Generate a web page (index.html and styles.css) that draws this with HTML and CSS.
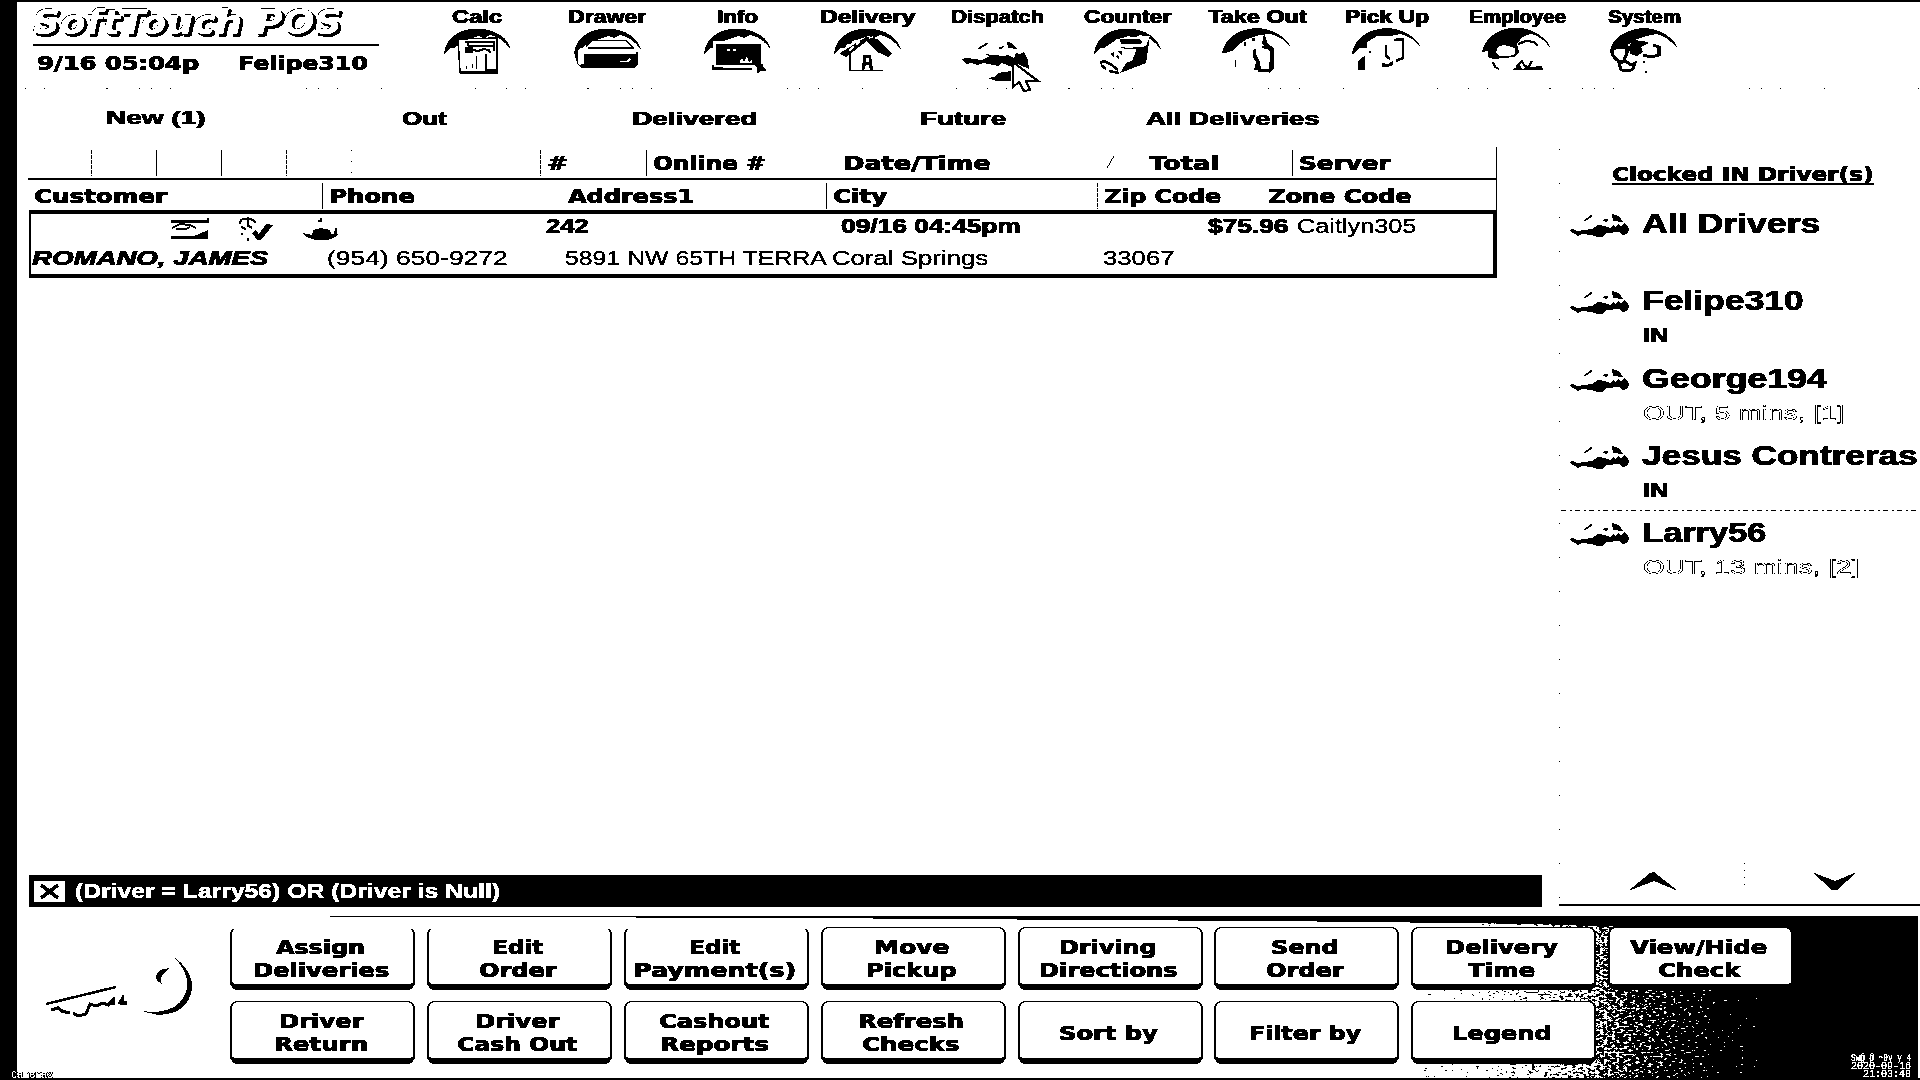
FILE: index.html
```html
<!DOCTYPE html>
<html lang="en">
<head>
<meta charset="utf-8">
<title>SoftTouch POS</title>
<link rel="stylesheet" href="styles.css">
</head>
<body>
<svg class="defs" width="0" height="0" aria-hidden="true">
  <defs>
    <filter id="mono" x="0" y="0" width="1" height="1" color-interpolation-filters="sRGB">
      <feColorMatrix type="saturate" values="0"/>
      <feComponentTransfer>
        <feFuncR type="discrete" tableValues="0 1"/><feFuncG type="discrete" tableValues="0 1"/><feFuncB type="discrete" tableValues="0 1"/>
      </feComponentTransfer>
    </filter>
    <filter id="grain" x="0" y="0" width="1" height="1" color-interpolation-filters="sRGB">
      <feTurbulence type="fractalNoise" baseFrequency="0.25 0.5" numOctaves="2" seed="4" result="n"/>
      <feColorMatrix in="n" type="matrix" values="1 0 0 0 0  1 0 0 0 0  1 0 0 0 0  0 0 0 0 1" result="g"/>
      <feComposite in="SourceGraphic" in2="g" operator="arithmetic" k2="1" k3="2" k4="-1"/>
    </filter>
    <linearGradient id="fade"><stop offset=".08" stop-color="#fff"/><stop offset=".3" stop-color="#d0d0d0"/><stop offset=".5" stop-color="#8c8c8c"/><stop offset=".66" stop-color="#444"/><stop offset=".9" stop-color="#000"/></linearGradient>
    <symbol id="dome" viewBox="0 0 70 48"><path d="M2 26Q4 11 20 4Q35 -1 50 4Q66 10 69 23Q60 10 48 8L42 11L37 9L24 13Q16 18 12 21H8L3 27Z"/></symbol>
    <symbol id="car" viewBox="0 0 60 24"><path d="M0 16L3 15L7 17L22 15L28 11L35 12L40 14L43 11L45 13L49 10L51 13L55 9L58 12L59 16L57 20L53 21L50 18L36 19L32 23H27L22 21L12 20L8 22L3 19ZM42 0L49 2L53 8L43 7ZM32 6L36 5L39 6L36 8Z"/><path d="M14 7L22 1.500" fill="none" stroke="#000" stroke-width="1.600"/></symbol>
  </defs>
</svg>
<div class="screen">
  <header class="top">
    <div class="brand">
      <div class="logo"><span class="fit" data-w="309">SoftTouch POS</span></div>
      <div class="session"><span class="fit" data-w="162">9/16 05:04p</span><span class="fit" data-w="130">Felipe310</span></div>
    </div>
    <nav class="tools">
      <a class="tool"><span class="fit" data-w="50">Calc</span>
        <svg viewBox="0 0 70 48"><use href="#dome"/><path d="M16 12L55 11V45H18Z" fill="#fff" stroke="#000" stroke-width="1.500"/><path d="M18 45.500H55V12" fill="none" stroke="#000" stroke-width="2.500"/><path d="M23 15H53M26 19H52M26 15V19M52 15V24M31 23L36 24L42 22L47 23L48 26" fill="none" stroke="#000" stroke-width="2"/><path d="M23 20H31V26H23Z"/><path d="M34 29V42M24 39V42M30 37V41" fill="none" stroke="#000"/><path d="M44 27V43H54" fill="none" stroke="#000" stroke-width="1.500"/></svg></a>
      <a class="tool"><span class="fit" data-w="78">Drawer</span>
        <svg viewBox="0 0 70 48"><use href="#dome"/><path d="M9 22L20 13L58 13L66 21V24H6Z" fill="#fff"/><path d="M14 20L20 13.500H54L61 21H16" fill="none" stroke="#000" stroke-width="1.500"/><path d="M3 22L6 20V36L9 41H62L66 38V25L12 27V37L6 38L3 30Z"/><path d="M10 27H64V23.500H10Z" fill="#fff"/><path d="M48 34H54L57 31L59 32L57 35H48Z" fill="#fff"/></svg></a>
      <a class="tool"><span class="fit" data-w="41">Info</span>
        <svg viewBox="0 0 70 48"><use href="#dome"/><path d="M11 14H62V41H11Z" fill="#fff"/><path d="M14 17H59V38H14Z"/><path d="M11 40V42H50M11 38V42M54 38H60V40L63 43H59L56 45V41Z" fill="#000" stroke="#000" stroke-width="1.500"/><path d="M25 22H28V24H25ZM31 22H34V24H31ZM38 34L40 31L42 35L45 29L47 35L50 33V36H38Z" fill="#fff"/></svg></a>
      <a class="tool"><span class="fit" data-w="95">Delivery</span>
        <svg viewBox="0 0 70 48"><use href="#dome"/><path d="M18 44V24L34 11L54 27L51 44Z" fill="#fff"/><path d="M8 26L34 10L46 12L60 26L56 30L50 27L45 25L35 14L14 30L10 28Z"/><path d="M14 19L17 17M20 16L24 13M17 24L22 19M24 18L28 14M37 11L41 10" stroke="#fff" stroke-width="1.800"/><path d="M18 26V43.500H51" fill="none" stroke="#000" stroke-width="1.500"/><path d="M31 28H39L41 43H38L37 38H34L32 43H30Z"/><path d="M34 31H37V35H34Z" fill="#fff"/></svg></a>
      <a class="tool dispatch"><span class="fit" data-w="93">Dispatch</span>
        <svg viewBox="0 0 70 48"><path d="M16 22L26 16" stroke="#000" stroke-width="2"/><path d="M0 32L5 31L20 33L28 29L22 27L42 29L46 28L52 31L54 26L58 27L62 25L66 33L67 42L56 37L50 40L40 36L36 39L22 36L15 38L10 36L4 37ZM35 21L42 19L40 22ZM45 15L50 16L56 22L46 21ZM26 51L33 50L36 46L49 44V54L34 54Z"/></svg>
        <svg class="cursor" viewBox="0 0 30 32"><path d="M2 1V26L8 21L13 30L19 29L15 20H27Z" fill="#fff" stroke="#000" stroke-width="2.200"/></svg></a>
      <a class="tool"><span class="fit" data-w="87">Counter</span>
        <svg viewBox="0 0 70 48"><use href="#dome"/><path d="M24 12L58 9L50 34L26 45L10 35Z" fill="#fff"/><path d="M28 12H47L51 15L48 17H29Z"/><path d="M58 9L54 36L28 46L34 36L40 34L45 21L54 19ZM25 19L35 21L48 20V22H33ZM18 27L22 25V30ZM26 24H30V28ZM24 30L26 28L28 33Z"/><path d="M8 36L12 34L20 38L26 43M9 38L14 42M17 44L27 46" fill="none" stroke="#000" stroke-width="2.400"/></svg></a>
      <a class="tool"><span class="fit" data-w="99">Take Out</span>
        <svg viewBox="0 0 70 48"><path d="M0 26Q3 11 19 4Q36 -2 50 4Q65 10 69 21Q60 9 48 7L38 8L25 12L16 18L12 23L3 26Z"/><path d="M22 15H24V19H22ZM30 11H33V14H30ZM42 6L46 17L52 21V42L47 46L48 24L43 20L40 16ZM31 23L34 22V27L38 35L39 43H32L34 35L31 30Z"/><path d="M13 33V40" stroke="#000"/><path d="M36 43.500H49M40 20L50 22" stroke="#000" stroke-width="2"/></svg></a>
      <a class="tool"><span class="fit" data-w="84">Pick Up</span>
        <svg viewBox="0 0 70 48"><path d="M0 26Q3 11 19 4Q36 -2 50 4Q65 10 69 21Q60 9 48 7L38 9L25 9L15 15V21L8 21L1 27Z"/><path d="M42 13L51 12V31L44 34M34 18V29L38 32" fill="none" stroke="#000" stroke-width="2.500"/><path d="M8 32L13 29V43H6V35ZM30 36L36 37L41 34V38L36 40H30ZM17 24H19V26H17Z"/></svg></a>
      <a class="tool"><span class="fit" data-w="97">Employee</span>
        <svg viewBox="0 0 70 48"><path d="M0 25Q4 9 20 3Q36 -2 50 4Q65 10 69 22Q60 9 49 7L40 10L35 17L37 25L32 30L12 32L6 30L6 24Z"/><path d="M16 20L22 18L33 21V27L28 29H18L14 26Z" fill="#fff"/><path d="M36 17L44 14L52 15L56 19M11 35L13 40L17 42M34 40L40 34L42 38L46 41L50 34" fill="none" stroke="#000" stroke-width="2.200"/><path d="M30 43L38 38L40 42L48 40L60 39L61 43Z"/></svg></a>
      <a class="tool last"><span class="fit" data-w="73">System</span>
        <svg viewBox="0 0 70 48"><path d="M1 26Q2 11 20 4Q36 -2 50 4Q65 10 69 22Q58 9 47 7L38 9L28 12Q20 16 17 20L8 22Z"/><path d="M5 18Q0 27 8 33L14 36M10 20H18V26L15 33M44 18L50 20V28L42 30L34 28" fill="none" stroke="#000" stroke-width="3"/><path d="M20 20L24 13L34 14L40 16L32 20L34 25L28 29L21 27Z"/><path d="M10 36L16 34L22 38L26 36L24 42L20 44L12 43Z" fill="none" stroke="#000" stroke-width="3"/><path d="M34 34H36V36H34ZM36 44H38V46H36Z"/></svg></a>
    </nav>
  </header>
  <svg class="specks" height="1" width="1903"><path d="M8 .5H1903" stroke="#000" stroke-dasharray="1 18 1 61 2 31 1 11 1 18 1 135 1 11 1 18 1 43 1 93 1 30"/></svg>

  <div class="middle">
    <main class="orders">
      <div class="tabs">
        <span class="fit t1" data-w="100">New (1)</span><span class="fit" data-w="45">Out</span><span class="fit" data-w="126">Delivered</span><span class="fit" data-w="86">Future</span><span class="fit" data-w="173">All Deliveries</span>
      </div>
      <div class="table">
        <div class="head head-a">
          <i></i><i class="bar broken"></i><i class="bar"></i><i class="bar"></i><i class="bar broken"></i><i class="bar dots"></i>
          <div class="bar broken"><span class="fit" data-w="21">#</span></div>
          <div class="bar"><span class="fit" data-w="113">Online #</span></div>
          <div class="when"><span class="fit" data-w="148">Date/Time</span></div>
          <div class="total"><svg width="9" height="14"><path d="M1 13L8 1" stroke="#000"/></svg><span class="fit" data-w="70">Total</span></div>
          <div class="bar"><span class="fit" data-w="92">Server</span></div>
        </div>
        <div class="head head-b">
          <div class="first"><span class="fit" data-w="133">Customer</span></div>
          <div class="bar"><span class="fit" data-w="86">Phone</span></div>
          <div><span class="fit" data-w="126">Address1</span></div>
          <div class="bar"><span class="fit" data-w="54">City</span></div>
          <div class="bar broken"><span class="fit" data-w="117">Zip Code</span></div>
          <div><span class="fit" data-w="143">Zone Code</span></div>
        </div>
        <div class="order">
          <div class="line line-a">
            <div class="marks">
              <svg width="40" height="24" viewBox="0 0 40 24"><path d="M1 5.500H39M1 21.500H38M38 2V6" stroke="#000" stroke-width="2.400"/><path d="M2 12L10 8L20 9L26 12M6 13H16L20 11" fill="none" stroke="#000" stroke-width="1.800"/><path d="M24 20L38 14V22H24Z"/></svg>
              <svg width="36" height="26" viewBox="0 0 36 26"><path d="M2 8Q2 2 8 3Q16 2 17 7M10 1V11M3 11L8 13M14 12L11 10" fill="none" stroke="#000" stroke-width="2.200"/><path d="M14 17L17 14L21 18L28 8L35 9L23 24H19ZM3 17H5V19H3ZM9 22H11V25H9Z"/></svg>
              <svg width="38" height="25" viewBox="0 0 38 25"><path d="M0 17L10 19L11 14L19 12L28 14L29 18L32 18L33 12H35V18L38 17L33 21L26 24H13L5 21ZM18 2H20V6H16V4H18Z"/></svg>
            </div>
            <b class="fit" data-w="42">242</b><b class="fit" data-w="180">09/16 04:45pm</b><b class="fit" data-w="80">$75.96</b><span class="fit" data-w="120">Caitlyn305</span>
          </div>
          <div class="line line-b">
            <b class="name"><span class="fit" data-w="236">ROMANO, JAMES</span></b>
            <div><span class="fit" data-w="181">(954) 650-9272</span></div>
            <div><span class="fit" data-w="262">5891 NW 65TH TERRA</span></div>
            <div><span class="fit" data-w="156">Coral Springs</span></div>
            <div><span class="fit" data-w="72">33067</span></div>
          </div>
        </div>
      </div>
      <div class="filter"><svg width="31" height="21" viewBox="0 0 31 21"><path d="M0 0H31V21H0Z" fill="#fff"/><path d="M7 4L24 17M24 4L7 17" stroke="#000" stroke-width="3.600"/></svg><span class="fit" data-w="425">(Driver = Larry56) OR (Driver is Null)</span></div>
    </main>
    <aside class="drivers">
      <h2><span class="fit" data-w="262">Clocked IN Driver(s)</span></h2>
      <ul>
        <li><svg class="car"><use href="#car"/></svg><div><b class="fit" data-w="178">All Drivers</b></div></li>
        <li><svg class="car"><use href="#car"/></svg><div><b class="fit" data-w="162">Felipe310</b><em><span class="fit" data-w="25">IN</span></em></div></li>
        <li><svg class="car"><use href="#car"/></svg><div><b class="fit" data-w="185">George194</b><em class="away"><span class="fit" data-w="201">OUT, 5 mins, [1]</span></em></div></li>
        <li class="ruled"><svg class="car"><use href="#car"/></svg><div><b class="fit" data-w="275">Jesus Contreras</b><em><span class="fit" data-w="25">IN</span></em></div></li>
        <li><svg class="car"><use href="#car"/></svg><div><b class="fit" data-w="124">Larry56</b><em class="away"><span class="fit" data-w="217">OUT, 13 mins, [2]</span></em></div></li>
      </ul>
      <div class="pager">
        <svg width="50" height="19" viewBox="0 0 50 19"><path d="M0 19L22 1L26 0L50 19L26 9Z"/></svg>
        <i class="split"></i>
        <svg width="46" height="18" viewBox="0 0 46 18"><path d="M0 0L23 9L45 0L25 18H20Z"/></svg>
      </div>
    </aside>
  </div>

  <footer class="actions">
    <svg class="shade" width="1903" height="164" viewBox="17 916 1903 164" preserveAspectRatio="none">
      <path d="M1420 916H1760V1078H1420Z" fill="url(#fade)" filter="url(#grain)"/>
      <path d="M1758 916H1918V1078H1758ZM330 916H1760V927L1640 927L1540 924L1260 921L800 918L330 916.500ZM17 1078H1920V1080H17Z"/>
      <path d="M1918.500 925V1078" stroke="#fff" stroke-dasharray="3 2"/>
    </svg>
    <svg class="key" width="160" height="64" viewBox="40 953 160 64"><path d="M46 1004L116 987" stroke="#000" stroke-width="2.600"/><path d="M51 1010L58 1008L62 1011L70 1013M73 1013L78 1016L86 1014L90 1004L96 1006L103 1003L108 1005L113 1000V1005M119 1004L122 999V1003H127" fill="none" stroke="#000" stroke-width="3"/><path d="M173 956Q193 971 192 988Q189 1014 158 1015L141 1011Q181 1016 187 988Q189 972 173 956ZM170 968L160 970Q151 978 162 984Q158 976 170 968Z"/></svg>
    <div class="buttons">
      <button class="open"><span class="fit" data-w="89">Assign</span><span class="fit" data-w="136">Deliveries</span></button>
      <button class="open"><span class="fit" data-w="51">Edit</span><span class="fit" data-w="77">Order</span></button>
      <button class="open"><span class="fit" data-w="51">Edit</span><span class="fit" data-w="163">Payment(s)</span></button>
      <button><span class="fit" data-w="75">Move</span><span class="fit" data-w="90">Pickup</span></button>
      <button><span class="fit" data-w="98">Driving</span><span class="fit" data-w="138">Directions</span></button>
      <button><span class="fit" data-w="68">Send</span><span class="fit" data-w="77">Order</span></button>
      <button><span class="fit" data-w="113">Delivery</span><span class="fit" data-w="67">Time</span></button>
      <button><span class="fit" data-w="137">View/Hide</span><span class="fit" data-w="82">Check</span></button>
      <button><span class="fit" data-w="84">Driver</span><span class="fit" data-w="94">Return</span></button>
      <button><span class="fit" data-w="84">Driver</span><span class="fit" data-w="120">Cash Out</span></button>
      <button><span class="fit" data-w="110">Cashout</span><span class="fit" data-w="109">Reports</span></button>
      <button><span class="fit" data-w="106">Refresh</span><span class="fit" data-w="98">Checks</span></button>
      <button><span class="fit" data-w="99">Sort by</span></button>
      <button><span class="fit" data-w="112">Filter by</span></button>
      <button><span class="fit" data-w="100">Legend</span></button>
    </div>
    <div class="camera">Camera2</div>
    <div class="stamp"><span class="fit" data-w="60">Sw@ @ ~0y y 4</span><span>2020-09-16</span><span>21:03:48</span></div>
  </footer>
</div>
<script src="fit.js"></script>
</body>
</html>
```
FILE: styles.css
```css
* { box-sizing: border-box; }
body { margin: 0; width: 1920px; height: 1080px; overflow: hidden; background: #000; color: #000; font-family: "Liberation Sans", Arial, sans-serif; }
.defs { position: absolute; }
svg { display: block; flex: none; overflow: visible; }

.screen { width: 1920px; height: 1080px; padding: 2px 0 0 17px; background: linear-gradient(#000, #000) 0 0 / 17px 100% no-repeat, linear-gradient(#000, #000) 0 0 / 100% 2px no-repeat, #fff; filter: url(#mono); overflow: hidden; }

.fit { display: inline-block; white-space: nowrap; flex: none; text-align: left; }
.fit > i { display: inline-block; font-style: inherit; transform-origin: 0 50%; }

/* heavy lettering: widened sideways so that the dots and counters stay open */
.session, .tool, .tabs, .head, .line b, h2, li b, li em, button { -webkit-text-stroke: .35px #000; text-shadow: .6px 0 0 #000, -.3px 0 0 #000; }

/* header */
.top { display: flex; height: 86px; }
.brand { width: 346px; margin-left: 16px; margin-right: 33px; }
.logo { height: 44px; padding-top: 3px; border-bottom: 2px solid #000; font: italic bold 34px/34px "DejaVu Sans", sans-serif; color: #fff; text-shadow: 2px 1px 0 #000, 3px 2px 0 #000, 2px 3px 0 #000, -.6px -.6px 0 #555; }
.session { display: flex; gap: 39px; padding: 4px 0 0 4px; font: bold 20px/26px "DejaVu Sans", sans-serif; }
.tools { display: flex; }
.tool { display: flex; flex-direction: column; align-items: center; width: 130px; padding-top: 5px; font: bold 18px/20px "Liberation Sans", sans-serif; -webkit-text-stroke: .6px #000; position: relative; }
.tool svg { width: 70px; height: 48px; }
.last { width: 124px; }
.tool .cursor { position: absolute; left: 79px; top: 59px; width: 30px; height: 32px; }

/* body */
.middle { display: flex; height: 827px; }
.orders { display: flex; flex-direction: column; width: 1542px; padding-left: 11px; }
.tabs { display: flex; height: 58px; padding: 16px 0 0 78px; font: bold 19px/24px "Liberation Sans", sans-serif; }
.tabs .fit { margin-top: 2px; }
.tabs .t1 { margin-top: 1px; }
.tabs .fit:nth-child(2) { margin-left: 196px; }
.tabs .fit:nth-child(3) { margin-left: 185px; }
.tabs .fit:nth-child(4) { margin-left: 162px; }
.tabs .fit:nth-child(5) { margin-left: 140px; }

.table { width: 1469px; }
.head { display: grid; font: bold 19px/28px "DejaVu Sans", sans-serif; border-right: 1px solid #000; }
.head-a { grid-template-columns: 63px 65px 65px 65px 65px 189px 106px 191px 270px 185px 204px; height: 33px; border-bottom: 2px solid #000; padding: 3px 0 4px; line-height: 26px; }
.head-b { grid-template-columns: 294px 239px 265px 271px 164px 235px; height: 30px; padding: 3px 0; line-height: 26px; }
.head > div { padding-left: 7px; }
.head > .when, .head > .first { padding-left: 6px; }
.bar { background: linear-gradient(#000, #000) 0 0 / 1px 100% no-repeat; }
.broken { background: repeating-linear-gradient(#000 0 4px, #fff 4px 5px) 0 0 / 1px 100% no-repeat; }
.dots { background: repeating-linear-gradient(#000 0 1px, #fff 1px 11px) 0 0 / 1px 100% no-repeat; }
.total { display: flex; gap: 34px; }
.total svg { margin: 5px 0 0 -8px; }
.order { height: 68px; border: solid #000; border-width: 4px 4px 4px 2px; margin-left: 1px; }
.line { font: 20px/24px "Liberation Sans", sans-serif; -webkit-text-stroke: .3px #000; }
.line-a { display: flex; height: 30px; }
.marks { display: flex; gap: 28px; width: 515px; padding: 2px 0 0 139px; }
.line-a > b:nth-of-type(2) { margin-left: 253px; }
.line-a > b:nth-of-type(3) { margin-left: 187px; }
.line-a > span { margin-left: 9px; }
.line-b { display: grid; grid-template-columns: 296px 238px 267px 271px 164px; padding-top: 2px; }
.name { font-style: italic; padding-left: 1px; }

.filter { display: flex; align-items: center; gap: 10px; width: 1513px; height: 32px; margin: auto 0 9px 1px; padding-left: 5px; background: #000; color: #fff; font: bold 20px/24px "Liberation Sans", sans-serif; -webkit-text-stroke: .4px #fff; }

/* driver list */
.drivers { display: flex; flex-direction: column; width: 361px; height: 817px; background: repeating-linear-gradient(#000 0 1px, #fff 1px 34px) 0 60px / 1px 100% no-repeat; border-bottom: 2px solid #000; }
h2 { margin: 71px 0 0 53px; height: 28px; font: bold 19px/28px "DejaVu Sans", sans-serif; }
h2 .fit { height: 25px; border-bottom: 2px solid #000; }
ul { list-style: none; margin: 18px 0 0; padding: 0; }
li { display: flex; gap: 12px; height: 77.3px; padding: 1px 0 0 11px; }
.ruled { background: repeating-linear-gradient(90deg, #000 0 5px, #fff 5px 9px, #000 9px 11px, #fff 11px 14px) 2px 72px / 100% 1px no-repeat; }
.car { width: 60px; height: 24px; margin-top: 7px; }
li div { display: flex; flex-direction: column; }
li b { font-size: 28px; line-height: 34px; }
li em { font: bold 20px/30px "Liberation Sans", sans-serif; padding: 2px 0 0 1px; }
li .away { font-weight: normal; color: #fff; -webkit-text-stroke: .9px #555; text-shadow: none; }
.pager { display: flex; align-items: flex-start; margin: auto 0 13px 69px; }
.split { width: 1px; height: 24px; margin: -9px 67px 0 66px; background: repeating-linear-gradient(#000 0 1px, #fff 1px 7px); }

/* footer */
.actions { position: relative; height: 166px; display: flex; align-items: flex-start; padding: 11px 0 0 23px; }
.shade { position: absolute; left: 0; top: 0; }
.key { margin: 26px 30px 0 0; position: relative; }
.buttons { position: relative; display: grid; grid-template-columns: repeat(8, 185px); grid-auto-rows: 63px; gap: 11px 11.9px; }
button { display: flex; flex-direction: column; align-items: center; justify-content: center; margin: 0; padding: 6px 4px 0 0; background: #fff; color: #000; border: solid #000; border-width: 1px 2px 6px; border-radius: 8px; font: bold 19px/23px "DejaVu Sans", sans-serif; }
.open { border-top-color: #fff; }
.camera { position: absolute; left: -6px; bottom: 2px; color: #fff; font: 10px/9px "Liberation Mono", monospace; text-shadow: 1px 0 #000, -1px 0 #000, 0 1px #000; }
.stamp { position: absolute; right: 9px; bottom: 3px; display: flex; flex-direction: column; align-items: flex-end; color: #fff; font: 10px/8px "Liberation Mono", monospace; -webkit-text-stroke: .2px #fff; }
```
FILE: fit.js
```js
// Stretch each label horizontally to its designed width.
document.querySelectorAll('.fit').forEach(function (el) {
  var inner = document.createElement('i');
  inner.textContent = el.textContent;
  el.textContent = '';
  el.appendChild(inner);
  var natural = inner.offsetWidth;
  var wanted = Number(el.dataset.w);
  el.style.width = wanted + 'px';
  inner.style.transform = 'scaleX(' + wanted / natural + ')';
});
```
